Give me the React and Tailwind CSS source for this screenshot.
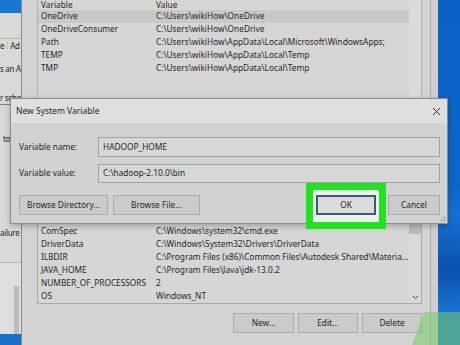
import React from "react";

const upperRows = [
  ["OneDrive", "C:\\Users\\wikiHow\\OneDrive", true],
  ["OneDriveConsumer", "C:\\Users\\wikiHow\\OneDrive"],
  ["Path", "C:\\Users\\wikiHow\\AppData\\Local\\Microsoft\\WindowsApps;"],
  ["TEMP", "C:\\Users\\wikiHow\\AppData\\Local\\Temp"],
  ["TMP", "C:\\Users\\wikiHow\\AppData\\Local\\Temp"],
];

const lowerRows = [
  ["ComSpec", "C:\\Windows\\system32\\cmd.exe"],
  ["DriverData", "C:\\Windows\\System32\\Drivers\\DriverData"],
  ["ILBDIR", "C:\\Program Files (x86)\\Common Files\\Autodesk Shared\\Materia..."],
  ["JAVA_HOME", "C:\\Program Files\\Java\\jdk-13.0.2"],
  ["NUMBER_OF_PROCESSORS", "2"],
  ["OS", "Windows_NT"],
];

function Row({ name, value, selected }) {
  return (
    <div className={`flex h-[13px] items-center whitespace-nowrap ${selected ? "bg-[#c9c9c9]" : ""}`}>
      <div className="w-[118px] shrink-0 pl-[3px]">{name}</div>
      <div>{value}</div>
    </div>
  );
}

function Btn({ children, w, className = "" }) {
  return (
    <div
      className={`flex h-[20px] items-center justify-center border border-[#ababab] bg-[#cbcbcb] ${w} ${className}`}
    >
      {children}
    </div>
  );
}

function LeftStrip() {
  return (
    <div className="relative flex w-[21px] shrink-0 flex-col overflow-hidden bg-[#d9d9d9] whitespace-nowrap text-[8px] tracking-[-0.3px]">
      <div className="h-[13px] bg-[#1877d2]" />
      <div className="h-[25px]" />
      <div className="h-px bg-[#b3b3b3]" />
      <div className="flex h-[13px] items-center gap-[3px]">
        <span>e</span>
        <span className="border-l border-[#c4c4c4] pl-[2px]">Ad</span>
      </div>
      <div className="h-[10px]" />
      <div className="flex h-[13px] items-center">s an A</div>
      <div className="h-[16px]" />
      <div className="flex h-[13px] items-center">r sche</div>
      <div className="h-px bg-[#808080]" />
      <div className="h-[27px]" />
      <div className="flex h-[13px] items-center pl-[3px]">to</div>
      <div className="h-[81px]" />
      <div className="flex h-[13px] items-center">ailure</div>
      <div className="h-[23px]" />
      <div className="h-px bg-[#b3b3b3]" />
      <div className="flex flex-1 flex-col bg-[#dedede]">
        <div className="h-[23px]" />
        <div className="ml-[14px] h-[48px] w-[5px] bg-[#bdbdbd]" />
        <div className="flex-1" />
        <div className="h-[11px] bg-[#1b6fc8]" />
      </div>
    </div>
  );
}

function EnvWindow() {
  return (
    <div className="flex w-[409px] shrink-0 flex-col border-l border-[#8a8a8a] bg-[#d3d3d3] pl-[15px] pr-[8px]">
      {/* upper list */}
      <div className="flex h-[115px] border-x border-[#b0b0b0] bg-[#d6d6d6]">
        <div className="flex-1">
          <div className="flex h-[10px] items-end whitespace-nowrap leading-[10px]">
            <div className="w-[118px] shrink-0 pl-[3px]">Variable</div>
            <div>Value</div>
          </div>
          {upperRows.map(([n, v, s]) => (
            <Row key={n} name={n} value={v} selected={s} />
          ))}
        </div>
        <div className="w-[12px] bg-[#dadada]" />
      </div>
      <div className="h-[83px]" />
      {/* lower list */}
      <div className="flex h-[106px] border border-[#a9a9a9] bg-[#d6d6d6]">
        <div className="flex-1">
          <div className="h-[26px]" />
          {lowerRows.map(([n, v]) => (
            <Row key={n} name={n} value={v} />
          ))}
        </div>
        <div className="flex w-[12px] flex-col bg-[#d9d9d9]">
          <div className="h-[24px]" />
          <div className="h-[11px] bg-[#bababa]" />
          <div className="flex-1" />
          <div className="flex h-[12px] items-center justify-center">
            <svg width="7" height="5" viewBox="0 0 7 5">
              <path d="M1 1 L3.5 3.5 L6 1" fill="none" stroke="#444" strokeWidth="1" />
            </svg>
          </div>
        </div>
      </div>
      <div className="flex flex-1 justify-end gap-[4px] pt-[9px]">
        <Btn w="w-[61px]">New...</Btn>
        <Btn w="w-[60px]">Edit...</Btn>
        <Btn w="w-[60px]">Delete</Btn>
      </div>
    </div>
  );
}

function Dialog() {
  return (
    <div className="absolute left-[10px] top-[98px] flex h-[126px] w-[438px] flex-col border border-[#8c8c8c] bg-[#d2d2d2] shadow-[0_2px_6px_rgba(0,0,0,0.25)]">
      <div className="flex h-[24px] items-center justify-between bg-[#dfdfdf] pl-[5px] pr-[6px]">
        <span className="text-[8.5px]">New System Variable</span>
        <svg width="9" height="9" viewBox="0 0 9 9">
          <path d="M1 1 L8 8 M8 1 L1 8" stroke="#333" strokeWidth="1" />
        </svg>
      </div>
      <div className="flex flex-1 flex-col px-[7px] pt-[14px]">
        <div className="flex h-[20px] items-center">
          <div className="w-[80px] pl-[1px]">Variable name:</div>
          <div className="flex h-[20px] flex-1 items-center border border-[#a2a2a2] bg-[#d7d7d7] pl-[4px]">
            HADOOP_HOME
          </div>
        </div>
        <div className="mt-[7px] flex h-[19px] items-center">
          <div className="w-[80px] pl-[1px]">Variable value:</div>
          <div className="flex h-[19px] flex-1 items-center border border-[#a2a2a2] bg-[#d7d7d7] pl-[4px]">
            C:\hadoop-2.10.0\bin
          </div>
        </div>
        <div className="mt-[12px] flex items-center">
          <Btn w="w-[89px]" className="ml-[1px]">Browse Directory...</Btn>
          <Btn w="w-[87px]" className="ml-[5px]">Browse File...</Btn>
          <div className="flex-1" />
          <div className="relative">
            <div className="absolute -inset-x-[10px] -top-[12px] -bottom-[14px] border-[7px] border-[#1fe51f] bg-[#eaf3e9] shadow-[inset_0_0_3px_rgba(255,255,255,0.9)]" />
            <div className="relative flex h-[20px] w-[60px] items-center justify-center border-2 border-[#3f5583] bg-[#dcdcdc]">
              OK
            </div>
          </div>
          <Btn w="w-[52px]" className="ml-[12px]">Cancel</Btn>
        </div>
      </div>
      <svg className="absolute bottom-[1px] right-[1px]" width="6" height="6" viewBox="0 0 6 6">
        <rect x="4" y="0" width="1" height="1" fill="#888" />
        <rect x="2" y="2" width="1" height="1" fill="#888" />
        <rect x="4" y="2" width="1" height="1" fill="#888" />
        <rect x="0" y="4" width="1" height="1" fill="#888" />
        <rect x="2" y="4" width="1" height="1" fill="#888" />
        <rect x="4" y="4" width="1" height="1" fill="#888" />
      </svg>
    </div>
  );
}

export default function App() {
  return (
    <div
      className="relative flex h-[345px] w-[460px] overflow-hidden bg-[#d3d3d3] text-[8.3px] leading-none text-[#262626]"
      style={{ fontFamily: "'Noto Sans', 'Open Sans', sans-serif" }}
    >
      <LeftStrip />
      <EnvWindow />
      <div className="flex w-[8px] shrink-0 border-l border-[#a8a8a8] bg-[#cfcfcf]" />
      <div className="flex-1 bg-[linear-gradient(180deg,#0b62c6_0%,#0c66cc_55%,#1670d2_62%,#0a52ad_78%,#1a78d8_92%,#1a78d8_100%)]" />
      <Dialog />
      <svg className="absolute bottom-0 right-0" width="48" height="34" viewBox="0 0 48 34">
        <polygon points="0,34 12,1 48,1 48,34" fill="rgba(120,200,100,0.55)" />
      </svg>
    </div>
  );
}
